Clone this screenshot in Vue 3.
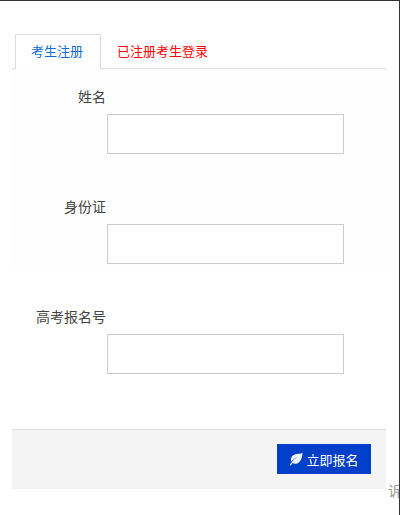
<script setup>
const fields = [
  { label: '姓名' },
  { label: '身份证' },
  { label: '高考报名号' },
]
</script>

<template>
  <div class="page">
    <div class="panel">
      <div class="tabs">
        <div class="tab active">考生注册</div>
        <div class="tab link"><span>已注册考生登录</span></div>
      </div>
      <form class="form" @submit.prevent>
        <div class="soft"></div>
        <div v-for="f in fields" :key="f.label" class="field">
          <label class="label">{{ f.label }}</label>
          <input class="input" type="text" />
        </div>
      </form>
      <div class="footer">
        <button class="btn" type="button">
          <svg class="leaf" viewBox="0 0 14 14" width="14" height="14">
            <path d="M13.5 0.8 C11.5 2 8.5 1.6 5.6 2.6 C2.6 3.7 1.2 6.6 2.4 9.6 C4 7.6 6 6 8.6 5 C6.4 6.4 4.2 8.2 2.6 10.2 L0.6 13 L1.8 13.6 L3.6 11 C5.8 12.4 8.6 12 10.4 10 C12.6 7.6 13.4 4 13.5 0.8 Z" fill="#eef2fd"/>
          </svg>
          <span>立即报名</span>
        </button>
      </div>
    </div>
    <span class="clipped">诉</span>
  </div>
</template>

<style scoped>
.page {
  position: relative;
  box-sizing: border-box;
  width: 400px;
  height: 515px;
  overflow: hidden;
  background: #fff;
  border-top: 1px solid #333;
  border-right: 1px solid #333;
  font-family: "Noto Sans CJK SC", "Liberation Sans", sans-serif;
  color: #444;
}
.panel {
  display: flex;
  flex-direction: column;
  width: 374px;
  margin-left: 12px;
  padding-top: 33px;
}
.tabs {
  display: flex;
  height: 35px;
  box-sizing: border-box;
  border-bottom: 1px solid #ddd;
  padding-left: 3px;
  font-size: 13px;
}
.tab {
  height: 35px;
  box-sizing: border-box;
  line-height: 32px;
  padding: 0 15px;
}
.active {
  width: 86px;
  color: #0a6cd6;
  background: #fff;
  border: 1px solid #ddd;
  border-bottom: 0;
}
.link {
  color: #f00;
  padding-left: 16px;
  line-height: 34px;
}
.form {
  position: relative;
  display: flex;
  flex-direction: column;
  gap: 42px;
  height: 360px;
  box-sizing: border-box;
  padding-top: 17px;
}
.soft {
  position: absolute;
  top: 0;
  left: -2px;
  right: -2px;
  height: 201px;
  background: #fefefe;
}
.field {
  position: relative;
  display: flex;
  flex-direction: column;
  align-items: flex-start;
  gap: 8px;
}
.label {
  width: 94px;
  height: 20px;
  line-height: 20px;
  font-size: 14px;
  text-align: right;
  white-space: nowrap;
}
.input {
  box-sizing: border-box;
  width: 237px;
  height: 40px;
  margin: 0 0 0 95px;
  background: #fff;
  border: 1px solid #ccc;
  outline: none;
}
.footer {
  display: flex;
  justify-content: flex-end;
  height: 60px;
  box-sizing: border-box;
  padding: 14px 15px 0 0;
  background: #f4f4f4;
  border-top: 1px solid #ddd;
}
.btn {
  display: flex;
  align-items: center;
  justify-content: center;
  gap: 3px;
  width: 94px;
  height: 30px;
  padding: 0;
  border: 0;
  background: #0040c8;
  color: #fff;
  font-family: inherit;
  font-size: 13px;
}
.clipped {
  position: absolute;
  left: 388px;
  top: 481px;
  font-size: 14px;
  line-height: 16px;
  color: #999;
}
</style>
